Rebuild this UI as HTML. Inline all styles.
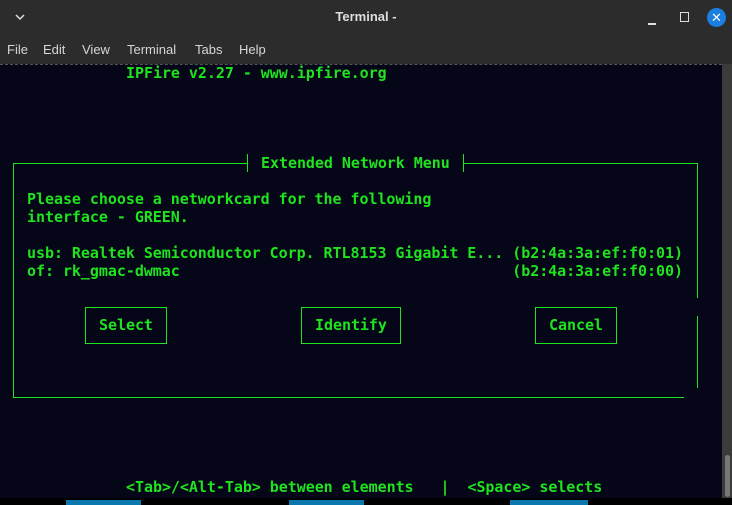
<!DOCTYPE html>
<html><head><style>
*{margin:0;padding:0;box-sizing:border-box}
body{width:732px;height:505px;overflow:hidden;background:#050617;position:relative;font-family:"Liberation Sans",sans-serif}
.tb{position:absolute;left:0;top:0;width:732px;height:38px;background:#2c2c2c;color:#dcdcdc}
.mb{position:absolute;left:0;top:38px;width:732px;height:26px;background:#2c2c2c;color:#d6d6d6;font-size:13px}
.mb span{position:absolute;top:4px}
.term{position:absolute;left:0;top:64px;width:722px;height:434px;background:#050617;border-top:1px dashed #555}
.t{position:absolute;font-family:"DejaVu Sans Mono","Liberation Mono",monospace;font-weight:bold;font-size:15px;letter-spacing:-0.045px;line-height:18px;color:#1fe31f;white-space:pre}
.l{position:absolute;background:#1fe31f}
.btn{position:absolute;border:1px solid #1fe31f;height:37px}
</style></head><body>
<div class="tb">
<svg style="position:absolute;left:14px;top:12px" width="12" height="10"><path d="M2 3 L6 7 L10 3" stroke="#ddd" stroke-width="1.5" fill="none"/></svg>
<div style="position:absolute;left:0;width:732px;top:9px;text-align:center;font-size:13px;font-weight:bold;color:#dedede">Terminal -</div>
<div style="position:absolute;left:648px;top:23px;width:8px;height:1.5px;background:#ddd"></div>
<div style="position:absolute;left:680px;top:12px;width:9px;height:10px;border:1.5px solid #ddd"></div>
<div style="position:absolute;left:707px;top:8px;width:19px;height:19px;border-radius:50%;background:#1a7fe0;color:#fff;font-size:13px;text-align:center;line-height:19px">✕</div>
</div>
<div class="mb"><span style="left:7px">File</span><span style="left:43px">Edit</span><span style="left:82px">View</span><span style="left:127px">Terminal</span><span style="left:195px">Tabs</span><span style="left:239px">Help</span></div>
<div class="term"></div>
<div style="position:absolute;left:722px;top:64px;width:10px;height:434px;background:#3b3b3b"></div>
<div style="position:absolute;left:725px;top:455px;width:5px;height:42px;background:#777;border-radius:3px"></div>
<div style="position:absolute;left:0;top:498px;width:732px;height:7px;background:#000"></div>
<div style="position:absolute;left:66px;top:500px;width:75px;height:5px;background:#0a78ad"></div>
<div style="position:absolute;left:289px;top:500px;width:75px;height:5px;background:#0a78ad"></div>
<div style="position:absolute;left:510px;top:500px;width:78px;height:5px;background:#0a78ad"></div>

<div class="t" style="left:126px;top:64px">IPFire v2.27 - www.ipfire.org</div>
<div class="l" style="left:13px;top:163px;width:235px;height:1px"></div>
<div class="l" style="left:247px;top:154px;width:1px;height:18px"></div>
<div class="t" style="left:261px;top:154px">Extended Network Menu</div>
<div class="l" style="left:463px;top:154px;width:1px;height:18px"></div>
<div class="l" style="left:463px;top:163px;width:235px;height:1px"></div>
<div class="l" style="left:13px;top:163px;width:1px;height:235px"></div>
<div class="l" style="left:697px;top:163px;width:1px;height:135px"></div>
<div class="l" style="left:697px;top:316px;width:1px;height:72px"></div>
<div class="l" style="left:13px;top:397px;width:671px;height:1px"></div>
<div class="t" style="left:27px;top:190px">Please choose a networkcard for the following
interface - GREEN.

usb: Realtek Semiconductor Corp. RTL8153 Gigabit E... (b2:4a:3a:ef:f0:01)
of: rk_gmac-dwmac                                     (b2:4a:3a:ef:f0:00)</div>
<div class="btn" style="left:85px;top:307px;width:82px"></div>
<div class="btn" style="left:301px;top:307px;width:100px"></div>
<div class="btn" style="left:535px;top:307px;width:82px"></div>
<div class="t" style="left:99px;top:316px">Select</div>
<div class="t" style="left:315px;top:316px">Identify</div>
<div class="t" style="left:549px;top:316px">Cancel</div>
<div class="t" style="left:126px;top:478px">&lt;Tab&gt;/&lt;Alt-Tab&gt; between elements   |  &lt;Space&gt; selects</div>
</body></html>
